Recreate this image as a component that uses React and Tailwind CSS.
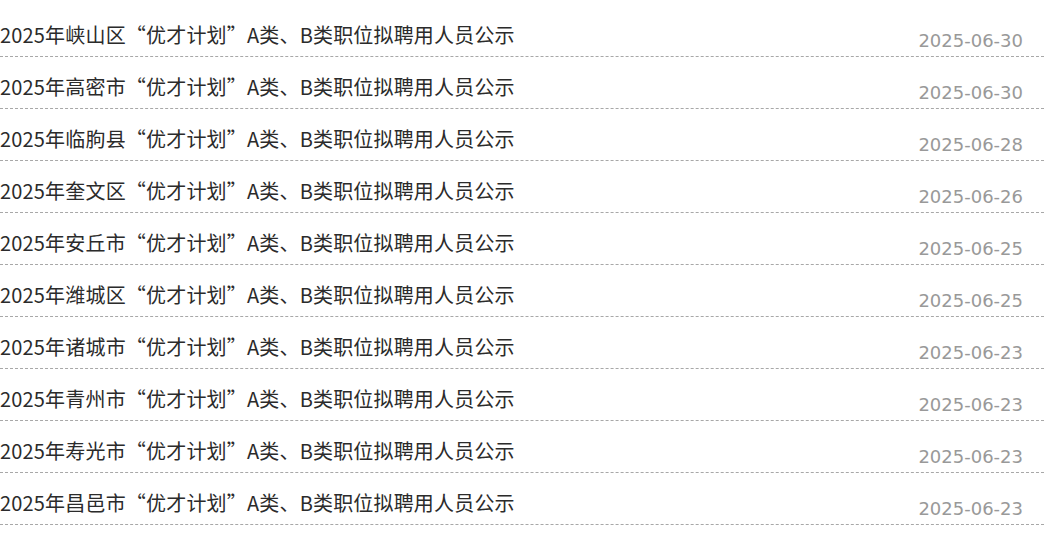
const ITEMS = [
  ["峡山区", "2025-06-30"],
  ["高密市", "2025-06-30"],
  ["临朐县", "2025-06-28"],
  ["奎文区", "2025-06-26"],
  ["安丘市", "2025-06-25"],
  ["潍城区", "2025-06-25"],
  ["诸城市", "2025-06-23"],
  ["青州市", "2025-06-23"],
  ["寿光市", "2025-06-23"],
  ["昌邑市", "2025-06-23"],
];

const App = () => {
  return (
    <div className="w-[1056px] h-[536px] overflow-hidden bg-white pt-[5px]">
      <ul className="w-[1044px]">
        {ITEMS.map(([area, date], i) => (
          <li
            key={i}
            className="flex h-[52px] items-start justify-between border-b border-dashed border-[#a8a8a8]"
          >
            <a
              href="#"
              className="pt-[16px] text-[20px] leading-[28px] tracking-[0.18px] text-[#2b2b2b]"
              style={{ fontFamily: '"Noto Sans CJK SC", sans-serif' }}
            >
              2025年{area}“优才计划”A类、B类职位拟聘用人员公示
            </a>
            <span
              className="pt-[24px] pr-[21px] text-[18px] leading-[24px] text-[#999]"
              style={{ fontFamily: '"DejaVu Sans", sans-serif' }}
            >
              {date}
            </span>
          </li>
        ))}
      </ul>
    </div>
  );
};

export default App;
